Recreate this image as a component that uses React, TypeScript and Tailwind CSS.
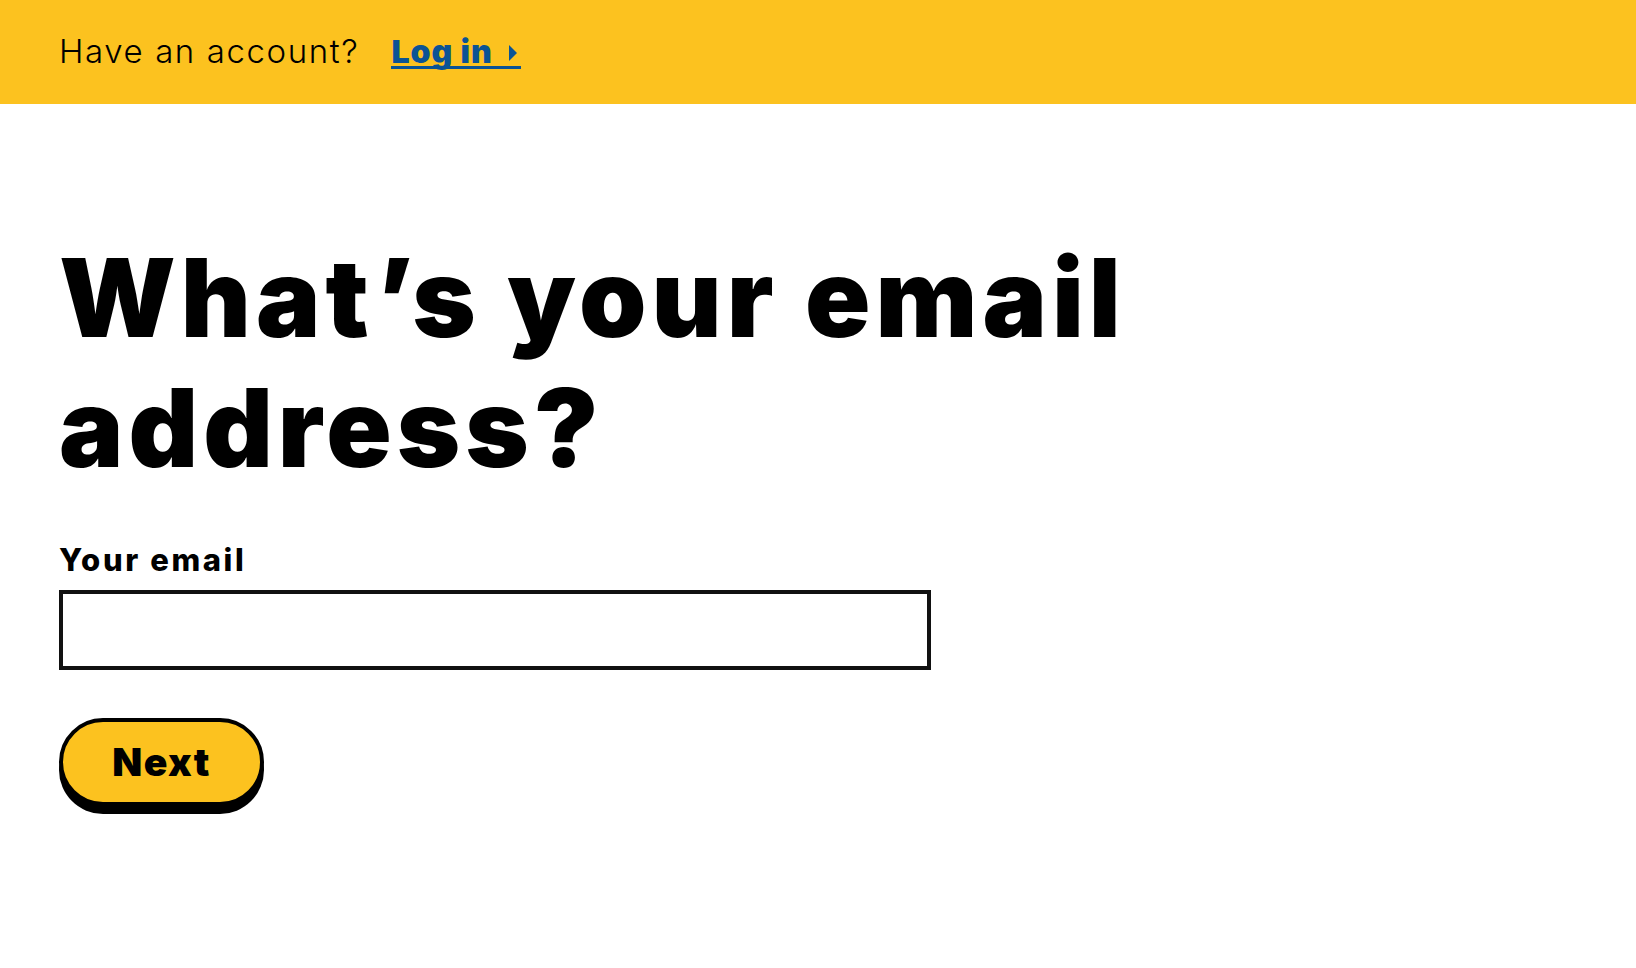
import React from "react";

export default function App() {
  return (
    <div className="min-h-[968px] w-full bg-white text-black" style={{ fontFamily: "Inter, 'Noto Sans', sans-serif" }}>
      <header className="flex h-[104px] items-center bg-[#fcc21f] px-[59px]">
        <span className="text-[33px] font-light tracking-[1.6px] text-black">Have an account?</span>
        <a href="#" className="ml-[32px] mt-[3px] flex items-center border-b-[3px] border-[#0b5394] text-[32px] font-black leading-[28px] tracking-[1px] text-[#0b5394]">
          Log in
          <svg width="10" height="16" viewBox="0 0 10 16" className="ml-[15px] mr-[3px] mt-[2px]">
            <path d="M1 0 L9 8 L1 16 Z" fill="#0b5394" />
          </svg>
        </a>
      </header>
      <main className="px-[59px] pt-[129px]">
        <h1 className="text-[108px] font-black leading-[130px] tracking-[5px]">
          What’s your email
          <br />
          address?
        </h1>
        <label className="mt-[47px] block text-[31px] font-extrabold leading-[40px] tracking-[2.6px]">Your email</label>
        <input type="email" className="mt-[10px] block h-[80px] w-[872px] border-[4px] border-[#111] bg-white outline-none" />
        <button className="mt-[48px] flex h-[88px] w-[205px] items-center justify-center rounded-full border-[4px] border-black bg-[#fcc21f] text-[39px] font-black tracking-[1.5px] shadow-[0_8px_0_0_#000]">
          Next
        </button>
      </main>
    </div>
  );
}
